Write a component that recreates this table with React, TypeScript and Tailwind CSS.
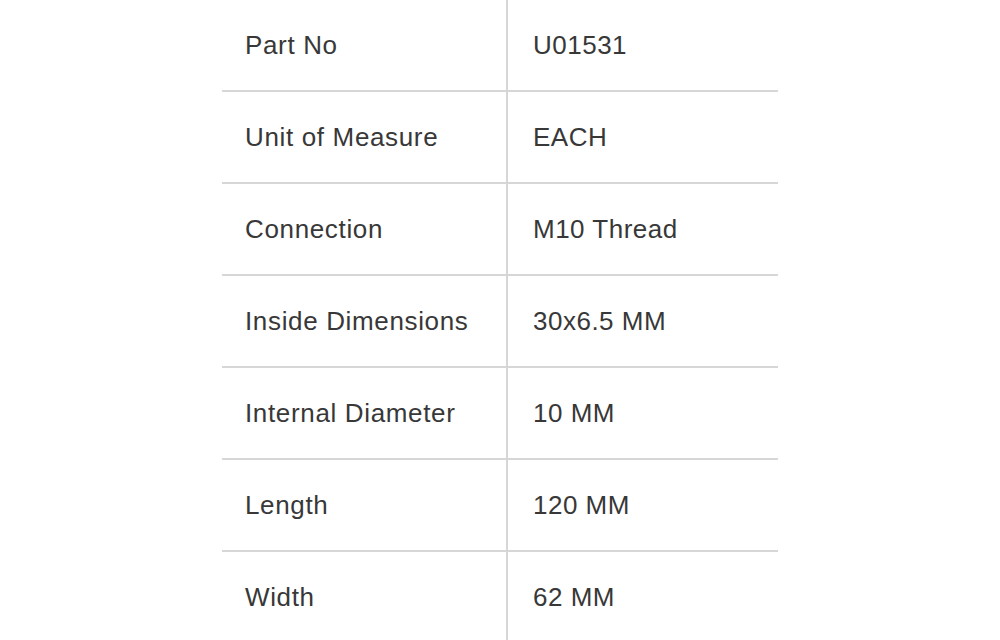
const specs: { label: string; value: string }[] = [
  { label: "Part No", value: "U01531" },
  { label: "Unit of Measure", value: "EACH" },
  { label: "Connection", value: "M10 Thread" },
  { label: "Inside Dimensions", value: "30x6.5 MM" },
  { label: "Internal Diameter", value: "10 MM" },
  { label: "Length", value: "120 MM" },
  { label: "Width", value: "62 MM" },
];

export default function App() {
  return (
    <div className="h-[640px] w-[1000px] overflow-hidden bg-white font-['Liberation_Sans',Arial,sans-serif] text-[26px] text-[#383838]">
      <div className="mx-auto w-[556px]">
        {specs.map((s) => (
          <div key={s.label} className="grid h-[92px] grid-cols-[284px_1fr] border-b-2 border-[#d6d6d6]">
            <div className="flex items-center pl-[23px] tracking-[0.65px]">{s.label}</div>
            <div className="flex items-center border-l-2 border-[#d6d6d6] pl-[25px] tracking-[0.5px]">{s.value}</div>
          </div>
        ))}
      </div>
    </div>
  );
}
